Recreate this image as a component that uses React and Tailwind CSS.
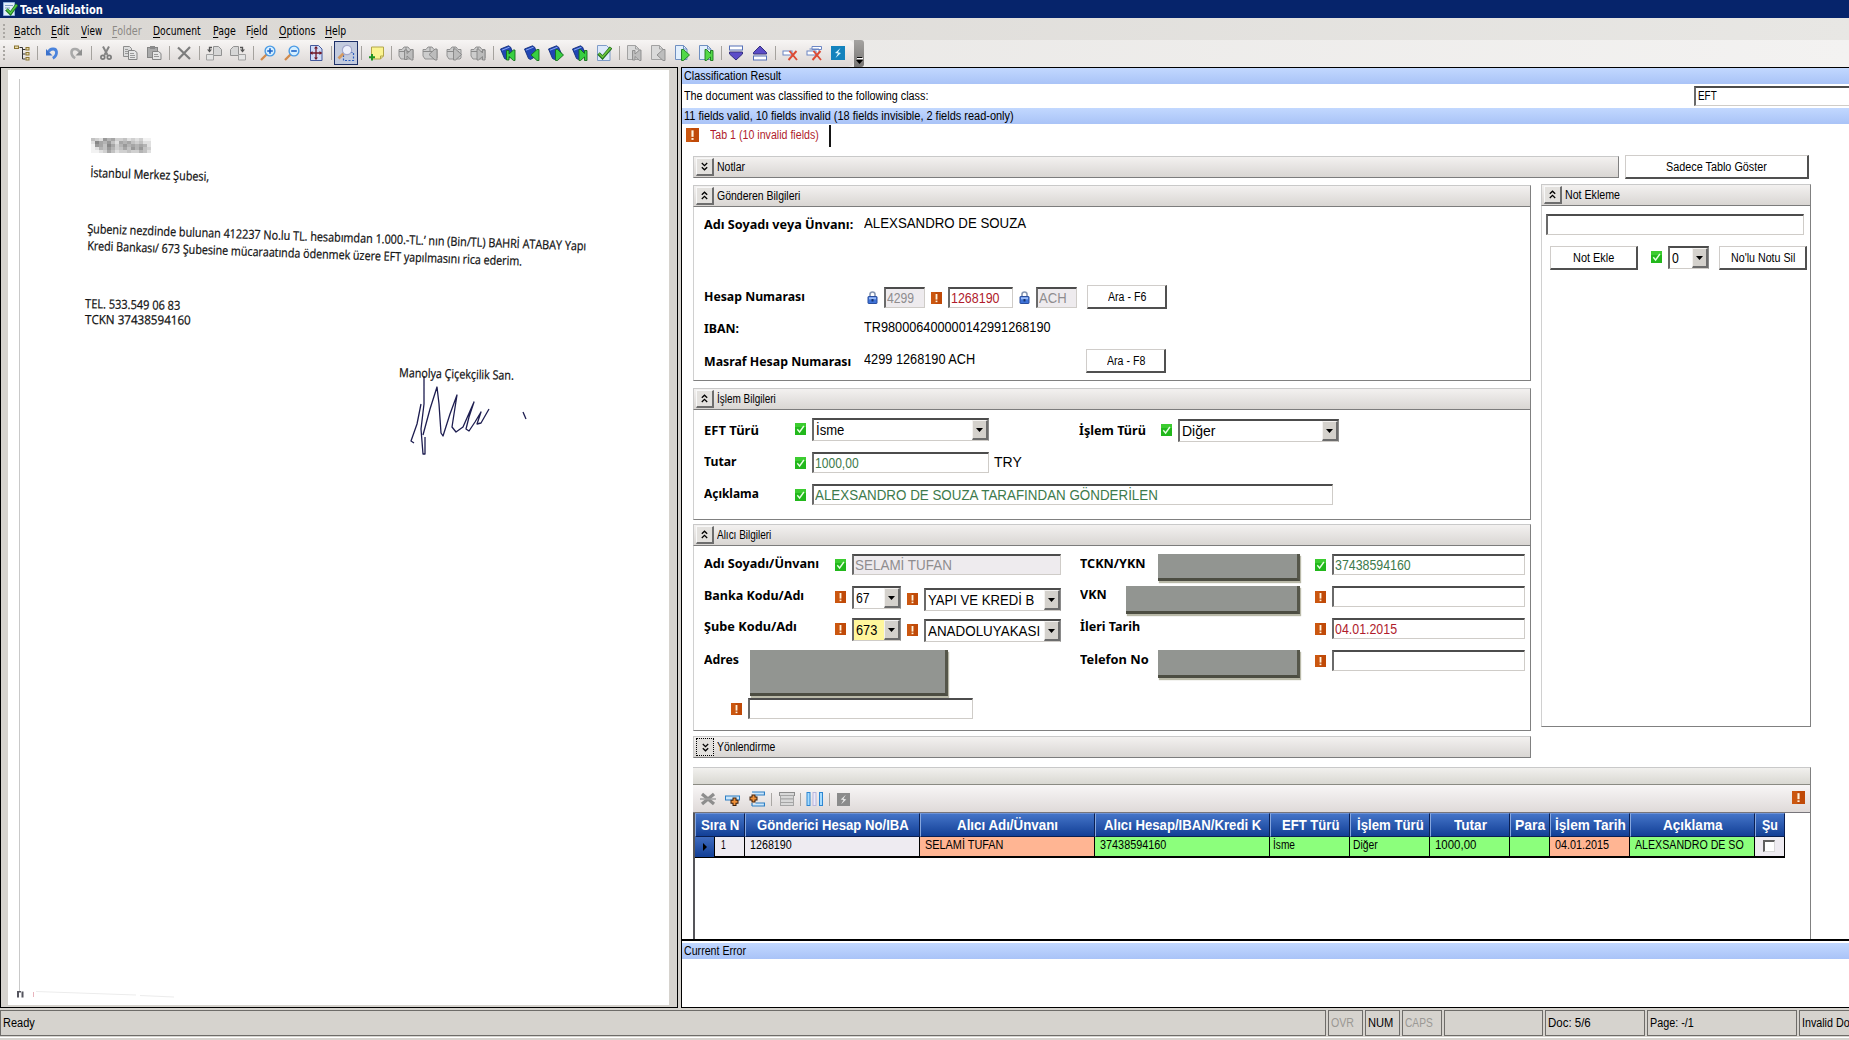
import React, { useLayoutEffect, useRef } from "react";

/* Text set to an exact width, so that it follows the narrow bitmap-like UI fonts. */
function Fit({ w, className = "", children }) {
  const ref = useRef(null);
  useLayoutEffect(() => {
    const el = ref.current;
    el.style.transform = "none";
    const natural = el.offsetWidth;
    if (natural > 0) el.style.transform = `scaleX(${w / natural})`;
  }, [w, children]);
  return (
    <span className={"block shrink-0 whitespace-nowrap text-left " + className} style={{ width: w }}>
      <span ref={ref} className="inline-block origin-left whitespace-nowrap">{children}</span>
    </span>
  );
}

const SANS = "font-['Liberation_Sans',sans-serif]";
const UI = "text-[12px] leading-4 ";

/* ---------- small status glyphs ---------- */
const Bang = ({ className = "w-[11px] h-[12px]" }) => (
  <svg className={"shrink-0 " + className} viewBox="0 0 12 12" preserveAspectRatio="none">
    <rect width="12" height="12" fill="#c04a08" />
    <rect x="0" y="0" width="5" height="12" fill="#d05c14" opacity=".7" />
    <rect x="5" y="2" width="2" height="5.6" fill="#fff3dc" />
    <rect x="5" y="8.6" width="2" height="1.6" fill="#fff3dc" />
  </svg>
);
const Check = ({ className = "w-[11px] h-[12px]" }) => (
  <svg className={"shrink-0 " + className} viewBox="0 0 12 12" preserveAspectRatio="none">
    <rect width="12" height="12" fill="#22b81c" />
    <rect x="0" y="0" width="12" height="4" fill="#3ccc30" />
    <path d="M2.500 6.300 5 9 9.700 3" fill="none" stroke="#e8ffe4" strokeWidth="1.500" />
  </svg>
);
const Lock = ({ className = "" }) => (
  <svg className={"h-[13px] w-[11px] shrink-0 " + className} viewBox="0 0 11 13">
    <path d="M3 6V3.300a2.500 2.300 0 0 1 5 0V6" fill="none" stroke="#8696b2" strokeWidth="1.600" />
    <rect x="1" y="5.500" width="9" height="7" rx=".5" fill="#3f73d8" stroke="#2b4f9e" />
    <rect x="2" y="6.300" width="7" height="2" fill="#9dbdf8" />
    <rect x="4.500" y="8" width="2" height="2.500" fill="#17356f" />
  </svg>
);

/* ---------- form parts ---------- */
const Label = ({ w, className = "", children }) => (
  <div className={"shrink-0 font-['Noto_Sans',sans-serif] text-[13px] leading-4 font-bold text-black " + className}>
    <Fit w={w}>{children}</Fit>
  </div>
);
const Value = ({ w, className = "", children }) => (
  <div className={"shrink-0 text-[14px] leading-4 " + className}>
    <Fit w={w}>{children}</Fit>
  </div>
);
const Field = ({ w, className = "", children }) => (
  <div className={"h-[21px] shrink-0 overflow-hidden border-t-2 border-l-2 border-r border-b border-t-[#4c4c4c] border-l-[#6a6a6a] border-r-[#cfccc8] border-b-[#cfccc8] pt-px pl-px text-[14px] leading-4 " + className}>
    {children && <Fit w={w}>{children}</Fit>}
  </div>
);
const Select = ({ w, className = "", textClass = "", children }) => (
  <div className={"flex h-[23px] shrink-0 overflow-hidden border-t-2 border-l-2 border-r border-b border-t-[#4c4c4c] border-l-[#6a6a6a] border-r-[#8a8a8a] border-b-[#cfccc8] text-[14px] leading-4 " + className}>
    <div className={"min-w-0 flex-1 pt-[2px] pl-[2px] " + textClass}>
      <Fit w={w}>{children}</Fit>
    </div>
    <div className="flex w-[16px] shrink-0 items-center justify-center border-t border-l border-r-2 border-b-2 border-t-[#f4f2f0] border-l-[#f4f2f0] border-r-[#6c6c6c] border-b-[#6c6c6c] bg-[#d4d1cc]">
      <svg width="7" height="4" viewBox="0 0 7 4"><path d="M0 0h7L3.500 4z" fill="#000" /></svg>
    </div>
  </div>
);
const Button = ({ w, className = "", children }) => (
  <div className={"flex h-[24px] shrink-0 items-center justify-center border-t border-l border-r-2 border-b-2 border-t-[#d0cdca] border-l-[#d0cdca] border-r-[#505050] border-b-[#505050] bg-white text-[12px] leading-4 " + className}>
    <Fit w={w}>{children}</Fit>
  </div>
);
const Redacted = ({ className = "" }) => (
  <div className={"shrink-0 border-r-[3px] border-b-[3px] border-r-[#55564a] border-b-[#4c4d42] bg-[#929591] shadow-[1px_2px_1px_#b9b9a8] " + className} />
);
const Chevrons = ({ open }) => (
  <svg width="7" height="9" viewBox="0 0 7 9" fill="none" stroke="#000" strokeWidth="1.300">
    {open ? <path d="M.8 3.800 3.500 1.200l2.700 2.600M.8 8 3.500 5.400 6.200 8" /> : <path d="M.8 1 3.500 3.600 6.200 1M.8 5.200 3.500 7.800l2.700-2.600" />}
  </svg>
);
const Header = ({ w, open = true, focused = false, className = "", children }) => (
  <div className={"flex h-[22px] shrink-0 items-center border border-t-[#c9c9c9] border-l-[#c9c9c9] border-r-[#808080] border-b-[#7c7c7c] bg-linear-to-b from-[#f3f1f0] to-[#d9d6d3] pl-[2px] " + className}>
    <div className={"flex h-[18px] w-[18px] shrink-0 items-center justify-center bg-[#e3e1de] " + (focused ? "border border-dotted border-black" : "border-t border-l border-r-2 border-b-2 border-t-[#f8f8f8] border-l-[#f8f8f8] border-r-[#6e6e6e] border-b-[#6e6e6e]")}>
      <Chevrons open={open} />
    </div>
    <div className={UI + "ml-[3px]"}><Fit w={w}>{children}</Fit></div>
  </div>
);
const Box = ({ className = "", children }) => (
  <div className={"shrink-0 border-r border-b border-l border-l-[#d0d0d0] border-r-[#808080] border-b-[#808080] " + className}>{children}</div>
);
const Row = ({ className = "h-8", children }) => <div className={"flex shrink-0 items-start " + className}>{children}</div>;

/* ---------- toolbar icons ---------- */
const I = ({ children }) => (
  <div className="flex h-[24px] w-6 shrink-0 items-center justify-center">
    <svg width="16" height="16" viewBox="0 0 16 16" fill="none">{children}</svg>
  </div>
);
const Sep = () => (
  <div className="flex w-1.5 shrink-0 justify-center"><div className="h-[14px] w-px bg-[#a5a29e]" /></div>
);
const Tree = () => (
  <I>
    <path d="M5.500 2.500h3M8.500 2.500v11.500M8.500 4.500h3M8.500 9h3M8.500 14h3" stroke="#333" />
    <rect x=".5" y="1" width="4" height="2.500" fill="#e9dcae" stroke="#8a7430" />
    <rect x="12" y="2.500" width="3" height="2.500" fill="#e9dcae" stroke="#8a7430" />
    <rect x="12" y="7.500" width="3" height="2.500" fill="#e9dcae" stroke="#8a7430" />
    <rect x="12" y="12.500" width="3" height="2.500" fill="#e9dcae" stroke="#8a7430" />
  </I>
);
const Undo = () => (
  <I>
    <path d="M4.500 7C6 3.500 12 2.500 12.500 7c.2 3-1.500 5-3.700 6.200" stroke="#4a83dc" strokeWidth="2.800" />
    <path d="M2 4v6.500h6.500z" fill="#3c72cc" />
  </I>
);
const Redo = () => (
  <I>
    <path d="M11.500 7C10 3.500 4 2.500 3.500 7c-.2 3 1.500 5 3.700 6.200" stroke="#a9a9a9" strokeWidth="2.600" />
    <path d="M14 4v6.500H7.500z" fill="#8f8f8f" />
  </I>
);
const Cut = () => (
  <I>
    <path d="M5 1.500 9.500 10M11 1.500 6.500 10" stroke="#858585" strokeWidth="2" />
    <circle cx="4.800" cy="12.300" r="1.900" stroke="#7c7c7c" strokeWidth="1.700" />
    <circle cx="11.200" cy="12.300" r="1.900" stroke="#7c7c7c" strokeWidth="1.700" />
  </I>
);
const Copy = () => (
  <I>
    <path d="M1.500 1.500h6l2 2v8h-8z" fill="#dcdcdc" stroke="#8c8c8c" />
    <path d="M6.500 5.500h6l2.500 2v7H6.500z" fill="#e6e6e6" stroke="#858585" />
    <path d="M8 8.500h4M8 10.500h5M8 12.500h5M3 4.500h3M3 6.500h3M3 8.500h3" stroke="#9a9a9a" />
  </I>
);
const Paste = () => (
  <I>
    <rect x="1.500" y="2.500" width="10" height="10" fill="#aaa" stroke="#858585" />
    <rect x="4" y="1" width="5" height="3" fill="#8a8a8a" />
    <path d="M6.500 6.500h6l2.500 2v6H6.500z" fill="#e6e6e6" stroke="#858585" />
    <path d="M8 9.500h4M8 11.500h5" stroke="#9a9a9a" />
  </I>
);
const Cross = () => <I><path d="m2 2.500 12 11.500M14 2 2.500 14" stroke="#7d7d7d" strokeWidth="2.200" /></I>;
const PageSwap = ({ flip }) => (
  <I>
    <g transform={flip ? "translate(16 0) scale(-1 1)" : undefined}>
      <path d="M7.500 1.500h5l3 3v6h-8z" fill="#d6d6d6" stroke="#929292" />
      <path d="M.5 9.500h7v5.500h-7z" fill="#e4e4e4" stroke="#a2a2a2" />
      <path d="M6 2.500H3.500V6" stroke="#555" strokeWidth="1.300" />
      <path d="M1 4.500h5L3.500 7.500z" fill="#555" />
    </g>
  </I>
);
const Zoom = ({ plus }) => (
  <I>
    <path d="m6.500 9.500-5.500 5.500" stroke="#d18a4c" strokeWidth="2.300" />
    <circle cx="10" cy="6" r="4.900" fill="#d6efff" stroke="#4a9ae4" strokeWidth="1.400" />
    <path d={plus ? "M7.200 6h5.600M10 3.200v5.600" : "M7.200 6h5.600"} stroke="#1b62c8" strokeWidth="1.600" />
  </I>
);
const FitPage = () => (
  <I>
    <path d="M2.500.5h8l3.500 3.500v11.500H2.500z" fill="#cfdcf8" stroke="#44599c" />
    <path d="M8 2v12M2.500 8h11" stroke="#701828" strokeWidth="1.300" />
    <path d="m8 1 2 2.500H6zM8 15l2-2.500H6zM2 8l2.500-2v4zM14 8l-2.500-2v4z" fill="#701828" />
  </I>
);
const ZoomArea = () => (
  <div className="flex h-[24px] w-6 shrink-0 items-center justify-center border border-[#1d3068] bg-[#c3cbde]">
    <svg width="18" height="18" viewBox="0 0 18 18" fill="none">
      <rect x="6.500" y="8.500" width="10" height="8" stroke="#2d5fc0" strokeWidth="1.200" strokeDasharray="2 1.500" />
      <path d="m6.500 9.500-5 5" stroke="#d49a62" strokeWidth="2.800" />
      <circle cx="10" cy="6" r="4.600" fill="#eef0fb" stroke="#a3a8cc" strokeWidth="1.200" />
    </svg>
  </div>
);
const Note = () => (
  <I>
    <path d="M3.500 2h12v9l-3 3h-9z" fill="#fbf491" stroke="#b3a64a" />
    <path d="M15.500 11h-3v3" stroke="#b3a64a" />
    <path d="M4 9v6.500M1 12.200h6" stroke="#219321" strokeWidth="2" />
  </I>
);
/* Navigation arrows, drawn in the lower right of a folder, a book or a page. */
const ARROW = {
  first: "M6.500 5.500H9V9l4.500-4H15v10.500h-1.500L9 11.500v3.500H6.500z",
  prev: "M13 4.500h2v11h-2L7 10z",
  next: "M7.500 4.500h2l6 5.500-6 5.500h-2z",
  last: "M7 4.500h1.500l4 4V5.500H15v10h-2.500v-3.500l-4 3.500H7z",
};
const FolderNav = ({ k }) => (
  <I>
    <path d="M1 4.500h3L6 2h4l2 2.500h3V13l-1 1H3l-2-3z" fill="#cdcdcd" stroke="#929292" />
    <path d="M1 6.500h12M8 2v4" stroke="#8b8b8b" />
    <path d={ARROW[k]} transform="translate(0 -.5)" fill="#bcbcbc" stroke="#848484" strokeWidth=".9" />
  </I>
);
const DocNav = ({ k }) => (
  <I>
    <path d="M.5 4 8.500.8l2 1.200 3.500 8-7.500 4.500-2-1z" fill="#2146b4" stroke="#14307e" strokeWidth=".9" />
    <path d="m2 5.200 7.500-3" stroke="#8aa8f4" />
    <path d={ARROW[k]} fill="#38cf42" stroke="#166a1c" strokeWidth=".9" />
  </I>
);
const PageNav = ({ k, gray }) => (
  <I>
    <path d="M1.500.5h8L13 4v10.500H1.500z" fill={gray ? "#dadada" : "#e2effd"} stroke={gray ? "#a2a2a2" : "#6f8fc0"} />
    <path d="M9.500.5V4H13" stroke={gray ? "#a2a2a2" : "#6f8fc0"} />
    <path d={ARROW[k]} fill={gray ? "#bdbdbd" : "#52d848"} stroke={gray ? "#8a8a8a" : "#18761c"} strokeWidth=".9" />
  </I>
);
const PageCheck = () => (
  <I>
    <path d="M1.500.5h9L14 4v11.500H1.500z" fill="#dde9fb" stroke="#7f9cc8" />
    <path d="m2.500 8.500 4 4L15 2.500" stroke="#1e6c1e" strokeWidth="3.400" />
    <path d="m2.800 8.500 3.700 3.600L14.600 2.900" stroke="#6cc43e" strokeWidth="1.600" />
  </I>
);
const Down = () => <I><rect x="1.500" y="1" width="13" height="4" fill="#fff" stroke="#5470b8" /><path d="M1.500 7h13v2L8 15 1.500 9z" fill="#5c4cc8" stroke="#35307e" /></I>;
const Up = () => <I><rect x="1.500" y="11" width="13" height="4" fill="#fff" stroke="#5470b8" /><path d="M1.500 9h13V7.500L8 1 1.500 7.500z" fill="#5c4cc8" stroke="#35307e" /></I>;
const ClearField = ({ multi }) => (
  <I>
    {multi && <path d="M6 1.500h9.500v3H6zM3.500 4h9.500v3" fill="#fff" stroke="#6c86c4" />}
    <rect x="1" y="6" width="9" height="4" fill="#fff" stroke="#6c86c4" />
    <path d="m7.500 6 7.500 9M14.500 6 6.500 15" stroke="#dc4a34" strokeWidth="1.900" />
  </I>
);
const Bolt = ({ gray, size = 14 }) => (
  <svg width={size} height={size} viewBox="0 0 14 14">
    <rect width="14" height="14" fill={gray ? "#8b8b8b" : "#1382bd"} />
    <path d="M9.500 2 4 7l3 .5L4.500 12 10 7 7 6.300z" fill={gray ? "#e6e6e6" : "#d8f6ff"} />
  </svg>
);
const Grip = () => (
  <div className="flex w-[10px] shrink-0 flex-col items-start gap-[2px] pl-[3px]">
    {[0, 1, 2, 3].map((n) => <i key={n} className="block h-[2px] w-[2px] bg-[#aaa7a3]" />)}
  </div>
);

const MENU = [
  ["Batch", 27, "ml-[4px]"], ["Edit", 18, "ml-[10px]"], ["View", 21, "ml-[12px]"], ["Folder", 30, "ml-[10px]"],
  ["Document", 48, "ml-[11px]"], ["Page", 23, "ml-[12px]"], ["Field", 22, "ml-[10px]"], ["Options", 36, "ml-[11px]"], ["Help", 21, "ml-[10px]"],
];

const Strip = ({ w, children }) => (
  <div className={UI + "flex h-4 shrink-0 items-center bg-linear-to-b from-[#c2d8ff] to-[#a9c3f7] pl-[2px]"}>
    {children && <Fit w={w}>{children}</Fit>}
  </div>
);

/* ---------- scanned letter ---------- */
const LETTER = "font-['Open_Sans','Noto_Sans',sans-serif] text-[12.500px] leading-4 text-[#111] [-webkit-text-stroke:0.25px_#111] origin-bottom-left";
const MOSAIC = ["bcd8a9ccbdcdcee", "d79a8bd9a9bcbdd", "e89b79ca8a9a9ad", "edab8acb9b8a8bc", "eedc9bdccbccabd"];
const SHADES = { 7: "bg-[#888]", 8: "bg-[#999]", 9: "bg-[#a6a6a6]", a: "bg-[#b4b4b4]", b: "bg-[#c2c2c2]", c: "bg-[#d0d0d0]", d: "bg-[#e0e0e0]", e: "bg-[#f2f2f2]" };

function Letter() {
  return (
    <div className="ml-[7px] h-[935px] w-[661px] shrink-0 bg-white">
      <div className="flex h-[921px] items-start">
        <div className="mt-[9px] ml-[11px] h-[912px] w-px bg-[#c9c9c9]" />
        <div className="flex flex-col pt-[68px]">
          <div className="ml-[71px] flex h-[15px] w-[60px] flex-col">
            {MOSAIC.map((r, i) => (
              <div key={i} className="flex flex-1">{r.split("").map((c, j) => <i key={j} className={"flex-1 " + SHADES[c]} />)}</div>
            ))}
          </div>
          <div className={LETTER + " mt-[12px] ml-[70px] rotate-[1.900deg]"}><Fit w={119}>İstanbul Merkez Şubesi,</Fit></div>
          <div className={LETTER + " mt-[40px] ml-[67px] rotate-[2deg]"}><Fit w={499}>Şubeniz nezdinde bulunan 412237 No.lu TL. hesabımdan 1.000.-TL.’ nın (Bin/TL) BAHRİ ATABAY Yapı</Fit></div>
          <div className={LETTER + " mt-px ml-[67px] rotate-[2.050deg]"}><Fit w={435}>Kredi Bankası/ 673 Şubesine mücaraatında ödenmek üzere EFT yapılmasını rica ederim.</Fit></div>
          <div className={LETTER + " mt-[42px] ml-[65px] rotate-[1.200deg]"}><Fit w={95}>TEL. 533.549 06 83</Fit></div>
          <div className={LETTER + " ml-[65px] rotate-[.300deg]"}><Fit w={106}>TCKN 37438594160</Fit></div>
          <div className={LETTER + " mt-[37px] ml-[379px] rotate-[1.400deg]"}><Fit w={115}>Manolya Çiçekçilik San.</Fit></div>
          <svg className="-mt-[7px] ml-[384px]" width="150" height="86" viewBox="405 375 150 86" fill="none" stroke="#1d1d50" strokeWidth="1.300" strokeLinejoin="round">
            <path d="M425 377 425 405 422 430 424 455 426 455 426 438M415 444 412 442 418 425 422 405M424 436 431 410 438 388 440 405 442 434 444 437 451 415 458 396 455 415 453 428 457 433 464 428 475 403 470 418 467 430 470 432 476 423 482 413 478 425 482 424 490 410" />
            <path d="M524 413 527 420" />
          </svg>
        </div>
      </div>
      <svg className="ml-[8px]" width="170" height="7" viewBox="0 0 170 7" fill="none">
        <path d="M2 .5v6M6.500 .5v6M1 .5h4" stroke="#55555e" strokeWidth="2" />
        <path d="M17.500 1v5" stroke="#e8b4bc" />
        <path d="M20 .5 120 4M124 4.500l34 1.500" stroke="#ececec" />
      </svg>
    </div>
  );
}

/* ---------- result table ---------- */
const COLS = [
  ["w-[50px]", "Sıra N", 38], ["w-[175px]", "Gönderici Hesap No/IBA", 152], ["w-[175px]", "Alıcı Adı/Ünvanı", 101],
  ["w-[175px]", "Alıcı Hesap/IBAN/Kredi K", 157], ["w-[80px]", "EFT Türü", 57], ["w-[80px]", "İşlem Türü", 67], ["w-[80px]", "Tutar", 33],
  ["w-[40px]", "Para", 30], ["w-[80px]", "İşlem Tarih", 71], ["w-[125px]", "Açıklama", 59], ["w-[30px]", "Şu", 16],
];
const CELLS = [
  ["w-[175px] bg-[#eeebf1] pl-[5px]", "1268190", 42], ["w-[175px] bg-[#ffb593] pl-[5px]", "SELAMİ TUFAN", 78],
  ["w-[175px] bg-[#8cff7c] pl-[5px]", "37438594160", 66], ["w-[80px] bg-[#8cff7c] pl-[3px]", "İsme", 22],
  ["w-[80px] bg-[#8cff7c] pl-[3px]", "Diğer", 25], ["w-[80px] bg-[#8cff7c] pl-[5px]", "1000,00", 41],
  ["w-[40px] bg-[#8cff7c]", "", 0], ["w-[80px] bg-[#ffb593] pl-[5px]", "04.01.2015", 54],
  ["w-[125px] bg-[#8cff7c] pl-[5px]", "ALEXSANDRO DE SO", 109],
];

function Table() {
  return (
    <div className="flex h-[173px] w-[1118px] flex-col border-t border-r border-t-[#c9c9c9] border-r-[#808080]">
      <div className="h-[17px] shrink-0 border-b border-b-[#8a8a82] bg-linear-to-b from-[#f1f0ee] to-[#d9d8d2]" />
      <div className="flex h-[28px] shrink-0 items-center border-b border-b-[#77757a] bg-linear-to-b from-[#f8f6f6] to-[#dfdad9] pt-px pr-[5px] pl-[7px]">
        <svg width="16" height="16" viewBox="0 0 16 16"><path d="m2 3 12 10M14 3 2 13" stroke="#8d8d8d" strokeWidth="3.200" /><path d="M0 8h16" stroke="#a2a2a2" strokeWidth="1.500" /></svg>
        <svg className="ml-[9px]" width="16" height="16" viewBox="0 0 16 16"><rect x=".5" y="5" width="14" height="4" fill="#cbe6fb" stroke="#2d7fc4" /><path d="M9.500 6.500v8.500M5.500 10.700h8" stroke="#3a1c08" strokeWidth="4" /><path d="M9.500 7.500v6.500M6.500 10.700h6" stroke="#f0923a" strokeWidth="2" /></svg>
        <svg className="ml-[8px]" width="16" height="16" viewBox="0 0 16 16"><path d="M3 1h12.500v3H6.500M3 15h12.500v-3H6.500M3 12v3" fill="#cbe6fb" stroke="#2d7fc4" strokeWidth="1.200" /><path d="M4.500 3.500v8M.5 7.500h8" stroke="#3a1c08" strokeWidth="4" /><path d="M4.500 4.500v6M1.500 7.500h6" stroke="#f0923a" strokeWidth="2" /></svg>
        <div className="mx-[6px] h-[13px] w-px bg-[#aaa7a4]" />
        <svg className="ml-px" width="16" height="16" viewBox="0 0 16 16" fill="#d8d8d8" stroke="#8c8c8c"><rect x=".5" y="1.500" width="15" height="3" /><rect x="1.500" y="4.500" width="13" height="3.500" stroke="#a5a5a5" /><rect x="1.500" y="8" width="13" height="3.500" stroke="#a5a5a5" /><rect x="1.500" y="11.500" width="13" height="3" stroke="#a5a5a5" /></svg>
        <div className="mx-[5px] h-[13px] w-px bg-[#aaa7a4]" />
        <svg width="18" height="16" viewBox="0 0 18 16"><g fill="#a6dcff" stroke="#2d86d2"><rect x="1" y="1.500" width="3" height="13" /><rect x="13.500" y="1.500" width="3" height="13" /></g><rect x="7" y="1.500" width="3" height="13" fill="#eceafa" stroke="#b9b6dc" /></svg>
        <div className="mx-[5px] h-[13px] w-px bg-[#aaa7a4]" />
        <span className="ml-[2px]"><Bolt gray size={13} /></span>
        <Bang className="mb-[4px] ml-auto h-[13px] w-[13px]" />
      </div>
      <div className="flex min-h-0 flex-1 flex-col border-l-2 border-l-[#55555a]">
        <div className="flex h-[24px] shrink-0 font-['Liberation_Sans',sans-serif] text-[14px] leading-4 font-bold text-white">
          {COLS.map(([cls, t, w]) => (
            <div key={t} className={"flex shrink-0 items-center justify-center border-t border-r border-b border-l border-t-[#6d93d8] border-l-[#86a6de] border-r-[#0a1f52] border-b-[#0a1f52] bg-linear-to-b from-[#4474c8] to-[#123f96] " + cls}>
              <Fit w={w}>{t}</Fit>
            </div>
          ))}
        </div>
        <div className="flex h-[21px] shrink-0 text-[12px] leading-4">
          <div className="flex w-[20px] shrink-0 items-center justify-center border-r border-b border-r-black border-b-black bg-linear-to-b from-[#3f6cc0] to-[#123f96]">
            <svg width="4" height="8" viewBox="0 0 4 8"><path d="M0 0v8l4-4z" fill="#000" /></svg>
          </div>
          <div className="w-[30px] shrink-0 border-r border-b-2 border-black bg-[#eeebf1] pl-[6px]"><Fit w={5}>1</Fit></div>
          {CELLS.map(([cls, t, w], i) => (
            <div key={i} className={"shrink-0 border-r border-b-2 border-black " + cls}>{t && <Fit w={w}>{t}</Fit>}</div>
          ))}
          <div className="w-[30px] shrink-0 border-r border-b-2 border-black bg-[#eeebf1] pt-[3px] pl-[8px]">
            <div className="h-[12px] w-[12px] border-t-2 border-l-2 border-r border-b border-t-[#606060] border-l-[#606060] border-r-[#d8d8d8] border-b-[#d8d8d8] bg-white" />
          </div>
        </div>
      </div>
    </div>
  );
}

/* ---------- status bar ---------- */
const STATUS = [
  ["w-[1326px]", "Ready", 32, ""], ["w-[35px]", "OVR", 23, "text-[#9a9894]"], ["w-[35px]", "NUM", 25, ""], ["w-[40px]", "CAPS", 28, "text-[#9a9894]"],
  ["w-[99px]", "", 0, ""], ["w-[100px]", "Doc: 5/6", 43, ""], ["w-[150px]", "Page: -/1", 44, ""], ["w-[60px]", "Invalid Document", 83, ""],
];

export default function App() {
  return (
    <div className={SANS + " flex h-[1040px] w-[1849px] flex-col overflow-hidden bg-[#d6d3ce] text-black"}>
      {/* title bar */}
      <div className="flex h-[18px] shrink-0 items-center bg-[#06246b] pl-[3px] text-white">
        <svg width="15" height="16" viewBox="0 0 15 16">
          <path d="M.5 1.500h11v13H.5z" fill="#e3eefa" stroke="#8fb0dc" />
          <path d="M2 4.500h8M2 7h5M2 9.500h3" stroke="#7f9cc4" />
          <path d="m3.500 8.500 4 4L14 3.500" fill="none" stroke="#1d7a20" strokeWidth="3.200" />
          <path d="m3.800 8.500 3.700 3.600L13.600 4" fill="none" stroke="#55c845" strokeWidth="1.500" />
        </svg>
        <div className="ml-[2px] pt-px font-['DejaVu_Sans',sans-serif] text-[11.500px] leading-4 font-bold"><Fit w={83}>Test Validation</Fit></div>
      </div>
      {/* menu */}
      <div className="flex h-[22px] shrink-0 items-center bg-linear-to-r from-[#dad7d3] to-[#e8e7e4] pt-[3px] font-['DejaVu_Sans',sans-serif] text-[11.500px] leading-4">
        <Grip />
        {MENU.map(([t, w, ml]) => (
          <div key={t} className={ml + (t === "Folder" ? " text-[#8c8985]" : "")}>
            <Fit w={w}>
              {t === "Field" ? <>F<u className="underline-offset-2">i</u>eld</> : <><u className="underline-offset-2">{t[0]}</u>{t.slice(1)}</>}
            </Fit>
          </div>
        ))}
      </div>
      {/* toolbar */}
      <div className="flex h-[27px] shrink-0 bg-linear-to-r from-[#e4e2df] to-[#f3f2f1]">
        <div className="flex w-[854px] shrink-0 items-center rounded-r-md bg-linear-to-b from-[#f7f5f4] to-[#dcd7d5] pb-px">
          <Grip />
          <Tree /><Sep /><Undo /><Redo /><Sep /><Cut /><Copy /><Paste /><Sep /><Cross /><Sep />
          <PageSwap /><PageSwap flip /><Sep /><Zoom plus /><Zoom /><FitPage /><Sep /><ZoomArea /><Sep /><Note /><Sep />
          <FolderNav k="first" /><FolderNav k="prev" /><FolderNav k="next" /><FolderNav k="last" /><Sep />
          <DocNav k="first" /><DocNav k="prev" /><DocNav k="next" /><DocNav k="last" /><PageCheck /><Sep />
          <PageNav k="first" gray /><PageNav k="prev" gray /><PageNav k="next" /><PageNav k="last" /><Sep />
          <Down /><Up /><Sep /><ClearField /><ClearField multi />
          <div className="flex w-6 justify-center"><Bolt /></div>
        </div>
        <div className="flex w-[10px] shrink-0 items-end justify-center rounded-r-[3px] bg-linear-to-b from-[#a5a3a1] to-[#777573] pb-[3px]">
          <svg width="7" height="7" viewBox="0 0 7 7"><path d="M1 0h5v1H1z" fill="#000" /><path d="M0 3h7L3.500 7z" fill="#000" /><path d="M1 1h6v1H1z" fill="#fff" /></svg>
        </div>
      </div>

      {/* work area */}
      <div className="flex h-[941px] shrink-0">
        <div className="flex w-[678px] shrink-0 border border-black pt-[2px]">
          <Letter />
        </div>
        <div className="w-[3px] shrink-0" />
        <div className="flex min-w-0 flex-1 flex-col border-t border-b border-l border-black bg-white">
          <Strip w={97}>Classification Result</Strip>
          <div className={UI + "flex h-6 shrink-0 items-center pb-px pl-[2px]"}>
            <Fit w={244}>The document was classified to the following class:</Fit>
            <div className="ml-[766px] h-[20px] min-w-0 flex-1 border-t-2 border-l-2 border-b border-t-[#4c4c4c] border-l-[#6a6a6a] border-b-[#cfccc8] pl-[2px]">
              <Fit w={19}>EFT</Fit>
            </div>
          </div>
          <Strip w={330}>11 fields valid, 10 fields invalid (18 fields invisible, 2 fields read-only)</Strip>
          <div className={UI + "flex h-8 shrink-0 items-start text-[#b01c2c]"}>
            <Bang className="mt-[4px] ml-[4px] h-[14px] w-[13px]" />
            <div className="mt-[3px] ml-[11px]"><Fit w={109}>Tab 1 (10 invalid fields)</Fit></div>
            <div className="mt-px ml-[10px] h-[22px] w-[2px] bg-[#151515]" />
          </div>

          <div className="flex h-[28px] shrink-0 items-start pl-[11px]">
            <Header w={28} open={false} className="w-[926px]">Notlar</Header>
            <Button w={101} className="-mt-px ml-[6px] w-[184px]">Sadece Tablo Göster</Button>
          </div>

          <div className="flex h-[583px] shrink-0 pl-[11px]">
            <div className="flex w-[838px] shrink-0 flex-col pt-px">
              <Header w={83}>Gönderen Bilgileri</Header>
              <Box className="h-[174px]">
                <Row className="h-[80px] pt-[8px] pl-[10px]">
                  <Label w={149} className="mt-px w-[160px]">Adı Soyadı veya Ünvanı:</Label>
                  <Value w={162}>ALEXSANDRO DE SOUZA</Value>
                </Row>
                <Row className="h-[33px] pl-[10px]">
                  <Label w={101} className="mt-px w-[163px]">Hesap Numarası</Label>
                  <Lock className="mt-[4px]" />
                  <Field w={27} className="ml-[6px] w-[41px] bg-[#eeebee] text-[#8f8d8f]">4299</Field>
                  <Bang className="mt-[5px] ml-[6px] h-[12px] w-[11px]" />
                  <Field w={49} className="ml-[6px] w-[65px] text-[#b01c2c]">1268190</Field>
                  <Lock className="mt-[4px] ml-[6px]" />
                  <Field w={28} className="ml-[6px] w-[41px] bg-[#eeebee] text-[#8f8d8f]">ACH</Field>
                  <Button w={38} className="-mt-[2px] ml-[10px] w-[80px]">Ara - F6</Button>
                </Row>
                <Row className="h-[31px] pl-[10px]">
                  <Label w={35} className="w-[160px]">IBAN:</Label>
                  <Value w={187} className="-mt-px">TR980006400000142991268190</Value>
                </Row>
                <Row className="h-[24px] pl-[10px]">
                  <Label w={147} className="mt-[2px] w-[160px]">Masraf Hesap Numarası</Label>
                  <Value w={111} className="w-[222px]">4299 1268190 ACH</Value>
                  <Button w={38} className="-mt-[2px] w-[80px]">Ara - F8</Button>
                </Row>
              </Box>

              <Header w={59} className="mt-[7px]">İşlem Bilgileri</Header>
              <Box className="h-[110px] pt-[8px] pl-[10px]">
                <Row className="h-[34px]">
                  <Label w={55} className="mt-[4px] w-[91px]">EFT Türü</Label>
                  <Check className="mt-[5px] h-[12px] w-[11px]" />
                  <Select w={28} className="ml-[6px] w-[177px]">İsme</Select>
                  <Label w={67} className="mt-[4px] ml-[90px] w-[82px]">İşlem Türü</Label>
                  <Check className="mt-[6px] h-[12px] w-[11px]" />
                  <Select w={33} className="mt-px ml-[6px] w-[161px]">Diğer</Select>
                </Row>
                <Row>
                  <Label w={33} className="mt-px w-[91px]">Tutar</Label>
                  <Check className="mt-[5px] h-[12px] w-[11px]" />
                  <Field w={44} className="ml-[6px] w-[177px] text-[#3d7a4c]">1000,00</Field>
                  <Value w={28} className="mt-[2px] ml-[5px]">TRY</Value>
                </Row>
                <Row>
                  <Label w={55} className="mt-px w-[91px]">Açıklama</Label>
                  <Check className="mt-[5px] h-[12px] w-[11px]" />
                  <Field w={343} className="ml-[6px] w-[521px] text-[#3d7a4c]">ALEXSANDRO DE SOUZA TARAFINDAN GÖNDERİLEN</Field>
                </Row>
              </Box>

              <Header w={54} className="mt-[4px]">Alıcı Bilgileri</Header>
              <Box className="flex h-[185px] pt-[8px] pl-[10px]">
                <div className="flex w-[375px] shrink-0 flex-col">
                  <Row>
                    <Label w={115} className="mt-px w-[131px]">Adı Soyadı/Ünvanı</Label>
                    <Check className="mt-[5px] h-[12px] w-[11px]" />
                    <Field w={97} className="ml-[6px] w-[209px] bg-[#eeebee] text-[#8f8d8f]">SELAMİ TUFAN</Field>
                  </Row>
                  <Row>
                    <Label w={100} className="mt-px w-[131px]">Banka Kodu/Adı</Label>
                    <Bang className="mt-[5px] h-[12px] w-[11px]" />
                    <Select w={14} className="ml-[6px] w-[49px]">67</Select>
                    <Bang className="mt-[7px] ml-[6px] h-[12px] w-[11px]" />
                    <Select w={106} className="mt-[2px] ml-[6px] w-[137px]">YAPI VE KREDİ B</Select>
                  </Row>
                  <Row>
                    <Label w={93} className="w-[131px]">Şube Kodu/Adı</Label>
                    <Bang className="mt-[5px] h-[12px] w-[11px]" />
                    <Select w={21} className="ml-[6px] w-[49px]" textClass="bg-[#fff79c]">673</Select>
                    <Bang className="mt-[6px] ml-[6px] h-[12px] w-[11px]" />
                    <Select w={112} className="mt-px ml-[6px] w-[137px]">ANADOLUYAKASI</Select>
                  </Row>
                  <Row className="h-[48px]">
                    <Label w={35} className="mt-px w-[46px]">Adres</Label>
                    <Redacted className="h-[46px] w-[198px]" />
                  </Row>
                  <Row>
                    <Bang className="mt-[5px] ml-[27px] h-[12px] w-[11px]" />
                    <Field className="ml-[6px] w-[225px]" />
                  </Row>
                </div>
                <div className="flex flex-1 flex-col">
                  <Row>
                    <Label w={66} className="mt-px ml-px w-[78px]">TCKN/YKN</Label>
                    <Redacted className="h-[27px] w-[142px]" />
                    <Check className="mt-[5px] ml-[15px] h-[12px] w-[11px]" />
                    <Field w={76} className="ml-[6px] w-[193px] text-[#3d7a4c]">37438594160</Field>
                  </Row>
                  <Row>
                    <Label w={27} className="ml-px w-[46px]">VKN</Label>
                    <Redacted className="h-[28px] w-[174px]" />
                    <Bang className="mt-[5px] ml-[15px] h-[12px] w-[11px]" />
                    <Field className="ml-[6px] w-[193px]" />
                  </Row>
                  <Row>
                    <Label w={60} className="ml-px w-[235px]">İleri Tarih</Label>
                    <Bang className="mt-[5px] h-[12px] w-[11px]" />
                    <Field w={62} className="ml-[6px] w-[193px] text-[#b01c2c]">04.01.2015</Field>
                  </Row>
                  <Row>
                    <Label w={69} className="mt-px ml-px w-[78px]">Telefon No</Label>
                    <Redacted className="h-[28px] w-[142px]" />
                    <Bang className="mt-[5px] ml-[15px] h-[12px] w-[11px]" />
                    <Field className="ml-[6px] w-[193px]" />
                  </Row>
                </div>
              </Box>

              <Header w={58} open={false} focused className="mt-[5px]">Yönlendirme</Header>
            </div>

            <div className="ml-[10px] flex w-[270px] shrink-0 flex-col">
              <Header w={55}>Not Ekleme</Header>
              <Box className="h-[521px] pt-[8px]">
                <Field className="ml-[4px] w-[258px]" />
                <div className="mt-[11px] flex items-start pl-[8px]">
                  <Button w={41} className="w-[88px]">Not Ekle</Button>
                  <Check className="mt-[5px] ml-[13px] h-[12px] w-[11px]" />
                  <Select w={7} className="ml-[6px] w-[41px]">0</Select>
                  <Button w={64} className="ml-[10px] w-[88px]">No'lu Notu Sil</Button>
                </div>
              </Box>
            </div>
          </div>

          <div className="h-[172px] shrink-0 overflow-hidden pl-[11px]"><Table /></div>
          <div className="h-[4px] shrink-0 border-t-2 border-black" />
          <Strip w={62}>Current Error</Strip>
        </div>
      </div>

      {/* status bar */}
      <div className="mt-[2px] flex h-[28px] shrink-0 gap-[2px] overflow-hidden border-b border-b-white text-[12px] leading-4">
        {STATUS.map(([cls, t, w, color], i) => (
          <div key={i} className={"flex h-[26px] shrink-0 items-center overflow-hidden border border-[#6e6c69] pl-[2px] " + cls + " " + color}>
            {t && <Fit w={w}>{t}</Fit>}
          </div>
        ))}
      </div>
    </div>
  );
}
